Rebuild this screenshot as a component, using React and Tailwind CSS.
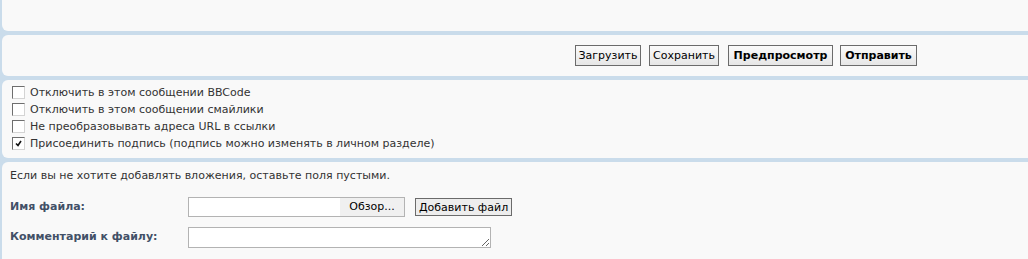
import React from "react";

const font = { fontFamily: '"DejaVu Sans", Verdana, sans-serif' };

function Check({ checked }) {
  return (
    <span className="inline-flex w-[13px] h-[13px] items-center justify-center bg-white border border-t-[#6e6e6e] border-l-[#6e6e6e] border-r-[#d4d4d4] border-b-[#d4d4d4] shrink-0">
      {checked && (
        <svg width="7" height="7" viewBox="0 0 7 7">
          <path d="M1 3.5 L3 5.5 L6 1" stroke="#111" strokeWidth="1.6" fill="none" />
        </svg>
      )}
    </span>
  );
}

function Btn({ children, bold, w }) {
  return (
    <button
      className={`h-[21px] ${w} border border-[#6b6b6b] bg-gradient-to-b from-[#fbfbfb] to-[#e6e6e6] text-[11px] text-black leading-none whitespace-nowrap ${bold ? "font-bold" : ""}`}
      style={font}
    >
      {children}
    </button>
  );
}

export default function App() {
  return (
    <div className="w-[1028px] h-[259px] overflow-hidden bg-[#cadceb] flex flex-col gap-[4px] text-[11px] text-[#333]" style={font}>
      <div className="ml-[2px] h-[31px] bg-[#f9f9f9] rounded-bl-[6px] shrink-0" />
      <div className="ml-[2px] h-[41px] bg-[#f9f9f9] rounded-l-[6px] shrink-0 flex items-center justify-end pr-[111px]">
        <Btn w="w-[66px]">Загрузить</Btn>
        <div className="w-[8px]" />
        <Btn w="w-[70px]">Сохранить</Btn>
        <div className="w-[9px]" />
        <Btn bold w="w-[105px]">Предпросмотр</Btn>
        <div className="w-[7px]" />
        <Btn bold w="w-[77px]">Отправить</Btn>
      </div>
      <div className="ml-[2px] h-[78px] bg-[#f9f9f9] rounded-l-[6px] shrink-0 flex flex-col pl-[10px] pt-[6px] gap-[4px]">
        {[
          ["Отключить в этом сообщении BBCode", false],
          ["Отключить в этом сообщении смайлики", false],
          ["Не преобразовывать адреса URL в ссылки", false],
          ["Присоединить подпись (подпись можно изменять в личном разделе)", true],
        ].map(([t, c]) => (
          <label key={t} className="flex items-center gap-[5px] h-[13px]">
            <Check checked={c} />
            <span className="leading-none">{t}</span>
          </label>
        ))}
      </div>
      <div className="ml-[2px] flex-1 bg-[#f9f9f9] rounded-tl-[6px] pl-[8px] pt-[7px]">
        <div className="leading-[14px]">Если вы не хотите добавлять вложения, оставьте поля пустыми.</div>
        <div className="flex items-center mt-[14px] h-[20px]">
          <div className="w-[178px] font-bold text-[#425067]">Имя файла:</div>
          <div className="flex w-[217px] h-[20px] border border-[#b3b3b3] bg-white">
            <div className="flex-1" />
            <div className="w-[64px] bg-[#f0f0f0] flex items-center justify-center text-black">Обзор...</div>
          </div>
          <div className="ml-[10px]">
            <button className="h-[18px] px-[3px] border border-[#6b6b6b] bg-[#ededed] text-[11px] text-black leading-none" style={font}>
              Добавить файл
            </button>
          </div>
        </div>
        <div className="flex items-center mt-[10px] h-[21px]">
          <div className="w-[178px] font-bold text-[#425067]">Комментарий к файлу:</div>
          <textarea className="w-[303px] h-[21px] border border-[#b3b3b3] bg-white resize" rows={1} />
        </div>
      </div>
    </div>
  );
}
